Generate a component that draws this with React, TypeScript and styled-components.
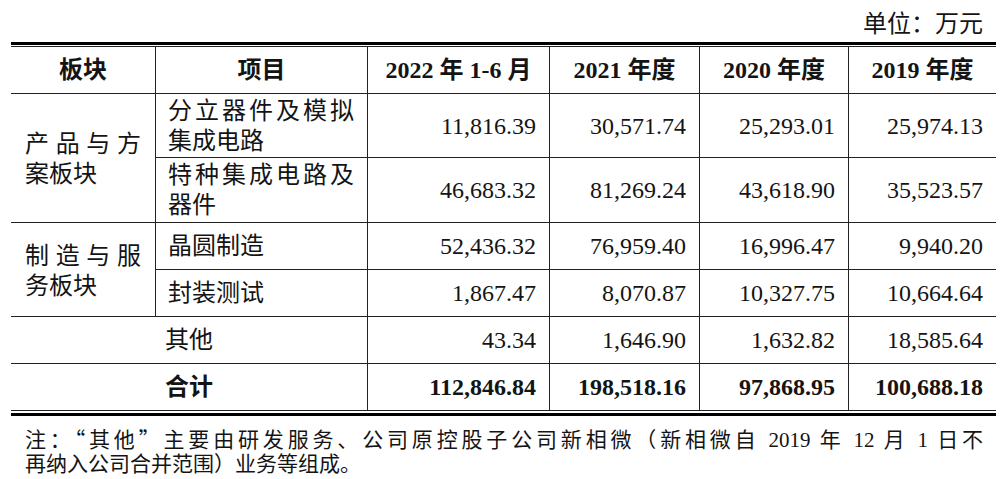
import React from "react";
import styled, { createGlobalStyle } from "styled-components";

const GlobalStyle = createGlobalStyle`
  html, body {
    margin: 0;
    padding: 0;
    background: #ffffff;
  }
  body {
    font-family: "Liberation Serif", "Noto Sans CJK SC", serif;
    color: #141414;
  }
`;

const Page = styled.div`
  width: 1000px;
  height: 479px;
  box-sizing: border-box;
  padding: 0 4px 0 11px;
  overflow: hidden;
`;

const Unit = styled.div`
  height: 42px;
  box-sizing: border-box;
  padding: 9px 13px 0 0;
  text-align: right;
  font-size: 24px;
  line-height: 30px;
`;

const Frame = styled.div`
  border-top: 3px solid #000;
  border-bottom: 3px solid #000;
  padding: 1px 0 2px;
`;

const Grid = styled.div`
  display: grid;
  grid-template-columns: 144px 212px 182px 150px 149px 148px;
  grid-template-rows: 47px 64px 65px 47px 47px 47px 47px;
  border-top: 1px solid #222;
`;

const Cell = styled.div<{ $span?: number; $rows?: number; $first?: boolean; $bold?: boolean }>`
  grid-column: span ${(p) => p.$span ?? 1};
  grid-row: span ${(p) => p.$rows ?? 1};
  display: flex;
  flex-direction: column;
  justify-content: center;
  box-sizing: border-box;
  border-bottom: 1px solid #222;
  border-left: ${(p) => (p.$first ? "none" : "1px solid #222")};
  font-size: 24px;
  line-height: 30px;
  font-weight: ${(p) => (p.$bold ? 700 : 400)};
  white-space: nowrap;
`;

const HeadCell = styled(Cell)`
  text-align: center;
  padding: 0 4px;
`;

const SectorCell = styled(Cell)`
  text-align: left;
  padding: 2px 14px 0 14px;
`;

const ItemCell = styled(Cell)`
  text-align: left;
  padding: 0 13px 0 12px;
`;

const CenterCell = styled(Cell)`
  text-align: center;
  padding: 0 0 0 0;
`;

const NumCell = styled(Cell)`
  text-align: right;
  padding: 0 13px 0 8px;
`;

const Line = styled.span`
  display: block;
`;

const JustLine = styled.span`
  display: block;
  text-align: justify;
  text-align-last: justify;
`;

const Note = styled.div`
  margin-top: 10px;
  padding: 0 13px 0 14px;
  font-size: 21px;
  line-height: 24px;
`;

const Quote = styled.span`
  font-family: "Noto Sans CJK SC", sans-serif;
`;

type Item = { lines: string[]; values: string[] };
type Group = { name: string[]; items: Item[] };

const groups: Group[] = [
  {
    name: ["产品与方", "案板块"],
    items: [
      { lines: ["分立器件及模拟", "集成电路"], values: ["11,816.39", "30,571.74", "25,293.01", "25,974.13"] },
      { lines: ["特种集成电路及", "器件"], values: ["46,683.32", "81,269.24", "43,618.90", "35,523.57"] },
    ],
  },
  {
    name: ["制造与服", "务板块"],
    items: [
      { lines: ["晶圆制造"], values: ["52,436.32", "76,959.40", "16,996.47", "9,940.20"] },
      { lines: ["封装测试"], values: ["1,867.47", "8,070.87", "10,327.75", "10,664.64"] },
    ],
  },
];

const headers = ["2022 年 1-6 月", "2021 年度", "2020 年度", "2019 年度"];
const other = ["43.34", "1,646.90", "1,632.82", "18,585.64"];
const total = ["112,846.84", "198,518.16", "97,868.95", "100,688.18"];

function TwoLines({ lines }: { lines: string[] }) {
  if (lines.length === 1) return <Line>{lines[0]}</Line>;
  return (
    <>
      <JustLine>{lines[0]}</JustLine>
      <Line>{lines[1]}</Line>
    </>
  );
}

export default function App() {
  return (
    <>
      <GlobalStyle />
      <Page>
        <Unit>单位：万元</Unit>
        <Frame>
          <Grid>
            <HeadCell $first $bold>板块</HeadCell>
            <HeadCell $bold>项目</HeadCell>
            {headers.map((h) => (
              <HeadCell key={h} $bold>
                {h}
              </HeadCell>
            ))}
            {groups.map((g) => (
              <React.Fragment key={g.name.join("")}>
                <SectorCell $first $rows={g.items.length}>
                  <TwoLines lines={g.name} />
                </SectorCell>
                {g.items.map((it) => (
                  <React.Fragment key={it.lines.join("")}>
                    <ItemCell>
                      <TwoLines lines={it.lines} />
                    </ItemCell>
                    {it.values.map((v, i) => (
                      <NumCell key={i}>{v}</NumCell>
                    ))}
                  </React.Fragment>
                ))}
              </React.Fragment>
            ))}
            <CenterCell $first $span={2}>其他</CenterCell>
            {other.map((v, i) => (
              <NumCell key={i}>{v}</NumCell>
            ))}
            <CenterCell $first $span={2} $bold>
              合计
            </CenterCell>
            {total.map((v, i) => (
              <NumCell key={i} $bold>
                {v}
              </NumCell>
            ))}
          </Grid>
        </Frame>
        <Note>
          <JustLine>
            注：<Quote>“</Quote>其他<Quote>”</Quote>主要由研发服务、公司原控股子公司新相微（新相微自 2019 年 12 月 1 日不
          </JustLine>
          <Line>再纳入公司合并范围）业务等组成。</Line>
        </Note>
      </Page>
    </>
  );
}
